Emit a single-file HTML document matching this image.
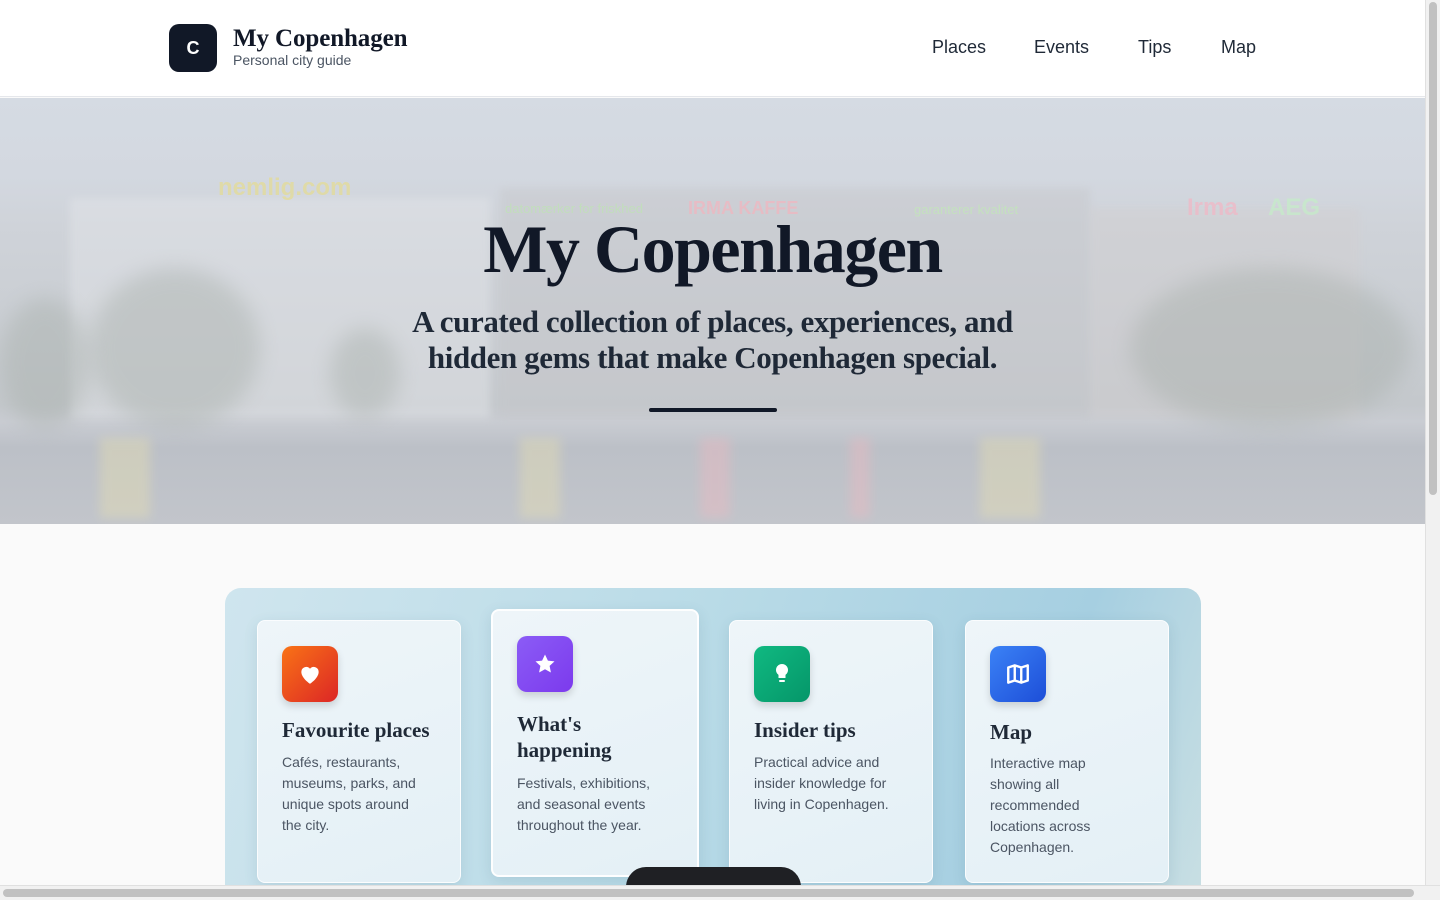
<!DOCTYPE html>
<html><head><meta charset="utf-8">
<style>
*{margin:0;padding:0;box-sizing:border-box}
html,body{width:1440px;height:900px;overflow:hidden;background:#fafafa;font-family:"Liberation Sans",sans-serif}
.wrap{position:absolute;left:0;top:0;width:1425px;height:885px;overflow:hidden;background:#fafafa}
header{position:absolute;left:0;top:0;width:1425px;height:97px;background:#fff;border-bottom:1px solid #e5e7eb}
.logo{position:absolute;left:169px;top:24px;width:48px;height:48px;border-radius:10px;background:#111827;color:#fff;font-weight:700;font-size:18px;display:flex;align-items:center;justify-content:center}
.brand{position:absolute;left:233px;top:25px;font-family:"Liberation Serif",serif;font-weight:700;font-size:25px;color:#111827;letter-spacing:-0.1px}
.sub{position:absolute;left:233px;top:52px;font-size:14px;color:#4b5563}
nav a{position:absolute;top:37px;font-size:18px;color:#1f2937;text-decoration:none}
.hero{position:absolute;left:0;top:98px;width:1425px;height:426px;overflow:hidden;
background:linear-gradient(180deg,#d5dbe3 0%,#d3d8e0 18%,#cfd3d9 30%,#c9cdd2 55%,#c4c8cc 72%,#c9ccd2 76%,#bcc0c7 82%,#c2c5cb 100%)}
.bld{position:absolute;opacity:.45;filter:blur(4px)}
.tree{position:absolute;border-radius:50%;background:#a9b0ac;opacity:.45;filter:blur(10px)}
.refl{position:absolute;top:340px;height:80px;width:8px;filter:blur(5px);opacity:.4}
h1{position:absolute;left:0;width:1425px;top:112px;text-align:center;font-family:"Liberation Serif",serif;font-weight:700;font-size:68px;color:#111827;letter-spacing:-1.5px}
.tag{position:absolute;left:0;width:1425px;top:206px;text-align:center;font-family:"Liberation Serif",serif;font-weight:700;font-size:31px;line-height:36px;color:#1f2937;letter-spacing:-0.4px}
.bar{position:absolute;left:649px;top:310px;width:128px;height:4px;border-radius:2px;background:#111827}
.panel{position:absolute;left:225px;top:588px;width:976px;height:320px;border-radius:16px;background:linear-gradient(110deg,#cfe5ee 0%,#b9dbe7 45%,#a6cfe1 80%,#c9dfe3 100%)}
.card{position:absolute;width:204px;height:263px;border-radius:8px;background:linear-gradient(160deg,#eef5f9,#e4f0f6);border:1px solid rgba(255,255,255,.8);box-shadow:0 4px 14px rgba(40,80,110,.12)}
.ic{position:absolute;left:24px;top:25px;width:56px;height:56px;border-radius:10px;display:flex;align-items:center;justify-content:center;box-shadow:0 4px 8px rgba(0,0,0,.15)}
.card h3{position:absolute;left:24px;top:96px;font-family:"Liberation Serif",serif;font-weight:700;font-size:21px;line-height:26px;color:#1f2937;width:170px}
.card p{position:absolute;left:24px;font-size:14px;line-height:21px;color:#4b5563;width:145px}
.tb{position:absolute;left:626px;top:867px;width:175px;height:40px;border-radius:20px;background:#1f2024}
.vs{position:absolute;left:1425px;top:0;width:15px;height:900px;background:#f1f1f1;border-left:1px solid #e0e0e0}
.vs div{position:absolute;left:3px;top:2px;width:8px;height:493px;border-radius:4px;background:#c1c1c1}
.hs{position:absolute;left:0;top:885px;width:1440px;height:15px;background:#f1f1f1;border-top:1px solid #e0e0e0}
.hs div{position:absolute;left:3px;top:3px;width:1411px;height:8px;border-radius:4px;background:#c1c1c1}
</style></head><body>
<div class="wrap">
<header>
<div class="logo">C</div>
<div class="brand">My Copenhagen</div>
<div class="sub">Personal city guide</div>
<nav><a style="left:932px">Places</a><a style="left:1034px">Events</a><a style="left:1138px">Tips</a><a style="left:1221px">Map</a></nav>
</header>
<div class="hero">
<div class="bld" style="left:70px;top:100px;width:420px;height:220px;background:#e4e6ea"></div>
<div class="bld" style="left:500px;top:90px;width:590px;height:230px;background:#c6c7cb"></div>
<div class="bld" style="left:1090px;top:110px;width:270px;height:210px;background:#d2cfd1"></div>
<div class="tree" style="left:90px;top:170px;width:170px;height:160px"></div>
<div class="tree" style="left:0;top:200px;width:90px;height:130px"></div>
<div class="tree" style="left:1130px;top:170px;width:280px;height:160px"></div>
<div class="tree" style="left:330px;top:230px;width:70px;height:90px"></div>
<div style="position:absolute;left:218px;top:76px;color:#e4dc96;font-weight:700;font-size:24px;opacity:.75">nemlig.com</div>
<div style="position:absolute;left:505px;top:103px;color:#bfe3b5;font-size:13px;opacity:.75">datomærker for friskhed</div>
<div style="position:absolute;left:688px;top:100px;color:#f0b6c0;font-weight:700;font-size:18px;opacity:.75">IRMA KAFFE</div>
<div style="position:absolute;left:914px;top:104px;color:#c2e8b8;font-size:13px;opacity:.75">garanterer kvalitet</div>
<div style="position:absolute;left:1187px;top:96px;color:#f0b8c6;font-weight:700;font-size:24px;opacity:.75">Irma</div>
<div style="position:absolute;left:1268px;top:96px;color:#c6ecc9;font-weight:700;font-size:24px;opacity:.75">AEG</div>
<div class="refl" style="left:700px;background:#f0b8c0;width:30px"></div>
<div class="refl" style="left:850px;background:#f0b8c0;width:20px"></div>
<div class="refl" style="left:520px;background:#e8e0b0;width:40px"></div>
<div class="refl" style="left:980px;background:#e8e0b0;width:60px"></div>
<div class="refl" style="left:100px;background:#e8e0b0;width:50px"></div>
<h1>My Copenhagen</h1>
<div class="tag">A curated collection of places, experiences, and<br>hidden gems that make Copenhagen special.</div>
<div class="bar"></div>
</div>
<div class="panel"></div>
<div class="card" style="left:257px;top:620px">
<div class="ic" style="background:linear-gradient(135deg,#f97316,#dc2626)"><svg width="26" height="26" viewBox="0 0 24 24"><path d="M12 21s-8-5.2-8-11a4.5 4.5 0 0 1 8-2.8A4.5 4.5 0 0 1 20 10c0 5.8-8 11-8 11z" fill="#fff"/></svg></div>
<h3>Favourite places</h3>
<p style="top:131px;width:140px">Cafés, restaurants, museums, parks, and unique spots around the city.</p>
</div>
<div class="card" style="left:491px;top:609px;width:208px;height:268px;border:2px solid rgba(255,255,255,.9)">
<div class="ic" style="background:linear-gradient(135deg,#8b5cf6,#7c3aed)"><svg width="24" height="24" viewBox="0 0 24 24"><path d="M12 2.5l2.9 6.1 6.6.8-4.9 4.5 1.3 6.6L12 17.2l-5.9 3.3 1.3-6.6L2.5 9.4l6.6-.8z" fill="#fff"/></svg></div>
<h3 style="top:100px">What's<br>happening</h3>
<p style="top:162px">Festivals, exhibitions, and seasonal events throughout the year.</p>
</div>
<div class="card" style="left:729px;top:620px">
<div class="ic" style="background:linear-gradient(135deg,#10b981,#059669)"><svg width="24" height="24" viewBox="0 0 24 24"><path d="M12 2a6 6 0 0 0-3.5 10.9V16h7v-3.1A6 6 0 0 0 12 2z" fill="#fff"/><rect x="9" y="18" width="6" height="2" rx="1" fill="#fff"/></svg></div>
<h3>Insider tips</h3>
<p style="top:131px">Practical advice and insider knowledge for living in Copenhagen.</p>
</div>
<div class="card" style="left:965px;top:620px">
<div class="ic" style="background:linear-gradient(135deg,#3b82f6,#1d4ed8)"><svg width="26" height="26" viewBox="0 0 24 24" fill="none" stroke="#fff" stroke-width="2.2" stroke-linejoin="round"><path d="M3 6l6-2 6 2 6-2v14l-6 2-6-2-6 2z M9 4v14 M15 6v14"/></svg></div>
<h3 style="top:98px">Map</h3>
<p style="top:132px;width:112px">Interactive map showing all recommended locations across Copenhagen.</p>
</div>
<div class="tb"></div>
</div>
<div class="vs"><div></div></div>
<div class="hs"><div></div></div>
</body></html>
